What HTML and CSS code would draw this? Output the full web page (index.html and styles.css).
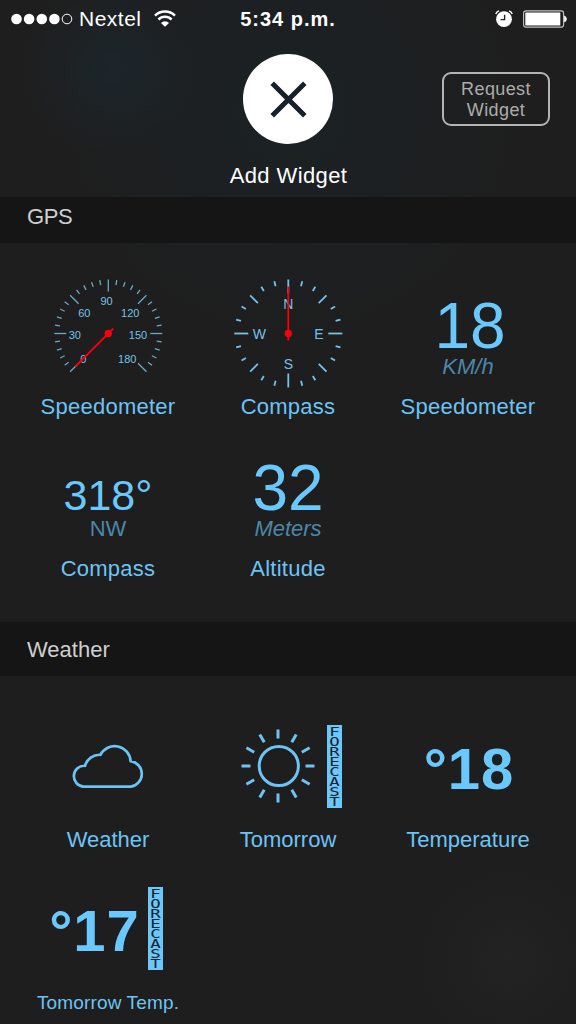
FILE: index.html
```html
<!DOCTYPE html>
<html lang="en">
<head>
    <meta charset="UTF-8">
    <meta name="viewport" content="width=device-width, initial-scale=1.0">
    <title>Add Widget</title>
    <link rel="stylesheet" href="styles.css">
</head>
<body>

<div class="status-bar">
    <div class="carrier">
        <svg class="signal" width="62" height="12" viewBox="0 0 62 12">
            <circle cx="5.5" cy="6" r="5.3" />
            <circle cx="18.1" cy="6" r="5.3" />
            <circle cx="30.8" cy="6" r="5.3" />
            <circle cx="43.4" cy="6" r="5.3" />
            <circle class="empty" cx="56" cy="6" r="4.8" />
        </svg>
        <span>Nextel</span>
        <svg class="wifi" width="22" height="17" viewBox="0 0 22 17">
            <path d="M1 5.6 A14.3 14.3 0 0 1 21 5.6" />
            <path d="M4.4 9.5 A9.3 9.3 0 0 1 17.6 9.5" />
            <path class="solid" d="M7 12.9 A5.4 5.4 0 0 1 15 12.9 L11 16.8 Z" />
        </svg>
    </div>
    <div class="time">5:34 p.m.</div>
    <div class="indicators">
        <svg width="18" height="18" viewBox="0 0 18 18">
            <circle cx="9" cy="9.2" r="7.9" fill="#fff" />
            <path d="M9.6 4.8 V9.6 H5.6" fill="none" stroke="#1d2022" stroke-width="1.4" />
            <path d="M0.8 4 A5 5 0 0 1 4 0.9 M14 0.9 A5 5 0 0 1 17.2 4" fill="none" stroke="#fff" stroke-width="1.4" />
        </svg>
        <svg width="44" height="18" viewBox="0 0 44 18">
            <rect x="0.6" y="0.9" width="40" height="16.2" rx="2.4" fill="none" stroke="#c4c4c4" stroke-width="1.1" />
            <rect x="2.3" y="2.5" width="35" height="13" rx="0.6" fill="#fff" />
            <path d="M41.6 6 A3.4 3.4 0 0 1 41.6 12 Z" fill="#fff" stroke="#fff" stroke-width="0.8" />
        </svg>
    </div>
</div>

<div class="header">
    <div class="add">
        <div class="close-circle">
            <svg width="37" height="37" viewBox="0 0 37 37">
                <path d="M2.2 2.2 L34.8 34.8 M34.8 2.2 L2.2 34.8" />
            </svg>
        </div>
        <div class="title">Add Widget</div>
    </div>
    <div class="request">Request<br>Widget</div>
</div>

<div class="section-title gps-title">GPS</div>
<div class="widgets">
    <div class="widget">
        <div class="icon">
            <svg width="120" height="120" viewBox="-60.3 -60.5 120 120">
                <g id="speed-ticks" class="ticks thin"></g>
                <g class="speed-numbers">
                    <text x="-25" y="29">0</text>
                    <text x="-33.5" y="5">30</text>
                    <text x="-24" y="-17">60</text>
                    <text x="-1.7" y="-28.7">90</text>
                    <text x="22" y="-17">120</text>
                    <text x="29.7" y="5">150</text>
                    <text x="19" y="29">180</text>
                </g>
                <path class="needle" d="M5 -5 L-33 33" />
                <circle class="pivot" cx="0" cy="0" r="3.7" />
            </svg>
        </div>
        <div class="label">Speedometer</div>
    </div>
    <div class="widget">
        <div class="icon">
            <svg width="120" height="120" viewBox="-60.3 -60.5 120 120">
                <g id="compass-ticks" class="ticks"></g>
                <g class="compass-letters">
                    <text x="0" y="-24.5">N</text>
                    <text x="30.5" y="5.5">E</text>
                    <text x="0" y="35.5">S</text>
                    <text x="-29" y="5.5">W</text>
                </g>
                <path class="needle" d="M0 -47 V7" />
                <circle class="pivot" cx="0" cy="0" r="3.7" />
            </svg>
        </div>
        <div class="label">Compass</div>
    </div>
    <div class="widget">
        <div class="icon reading">
            <div class="value speed">18</div>
            <div class="unit italic">KM/h</div>
        </div>
        <div class="label">Speedometer</div>
    </div>
    <div class="widget">
        <div class="icon reading">
            <div class="value small">318°</div>
            <div class="unit">NW</div>
        </div>
        <div class="label">Compass</div>
    </div>
    <div class="widget">
        <div class="icon reading">
            <div class="value">32</div>
            <div class="unit italic">Meters</div>
        </div>
        <div class="label">Altitude</div>
    </div>
</div>

<div class="section-title">Weather</div>
<div class="widgets weather">
    <div class="widget">
        <div class="icon">
            <svg class="cloud" width="73" height="45" viewBox="0 0 73 45">
                <path d="M11.6 42.6 A10.4 10.4 0 0 1 13 21.8 A15 15 0 0 1 28.4 10.8 A16 16 0 0 1 58.6 17.2 A12.8 12.8 0 0 1 58.6 42.6 Z" />
            </svg>
        </div>
        <div class="label">Weather</div>
    </div>
    <div class="widget">
        <div class="icon forecast-icon">
            <svg class="sun" width="74" height="74" viewBox="-37 -37 74 74">
                <circle cx="0.8" cy="0" r="19.6" />
                <g id="sun-rays"></g>
            </svg>
            <svg class="forecast" width="15" height="83" viewBox="0 0 15 83">
                <rect width="15" height="83" />
                <text transform="scale(1.5 1)" x="5" y="11.2">F</text>
                <text transform="scale(1.5 1)" x="5" y="21.2">O</text>
                <text transform="scale(1.5 1)" x="5" y="31.2">R</text>
                <text transform="scale(1.5 1)" x="5" y="41.2">E</text>
                <text transform="scale(1.5 1)" x="5" y="51.2">C</text>
                <text transform="scale(1.5 1)" x="5" y="61.2">A</text>
                <text transform="scale(1.5 1)" x="5" y="71.2">S</text>
                <text transform="scale(1.5 1)" x="5" y="81.2">T</text>
            </svg>
        </div>
        <div class="label">Tomorrow</div>
    </div>
    <div class="widget">
        <div class="icon">
            <div class="temp"><span class="degree">°</span>18</div>
        </div>
        <div class="label">Temperature</div>
    </div>
    <div class="widget">
        <div class="icon">
            <div class="temp wide"><span class="degree">°</span>17</div>
            <svg class="forecast" width="15" height="83" viewBox="0 0 15 83">
                <rect width="15" height="83" />
                <text transform="scale(1.5 1)" x="5" y="11.2">F</text>
                <text transform="scale(1.5 1)" x="5" y="21.2">O</text>
                <text transform="scale(1.5 1)" x="5" y="31.2">R</text>
                <text transform="scale(1.5 1)" x="5" y="41.2">E</text>
                <text transform="scale(1.5 1)" x="5" y="51.2">C</text>
                <text transform="scale(1.5 1)" x="5" y="61.2">A</text>
                <text transform="scale(1.5 1)" x="5" y="71.2">S</text>
                <text transform="scale(1.5 1)" x="5" y="81.2">T</text>
            </svg>
        </div>
        <div class="label label-small">Tomorrow Temp.</div>
    </div>
</div>

<script>
    // Draws one tick, angle in degrees clockwise from the top
    function addTick(group, angle, inner, outer) {
        const line = document.createElementNS("http://www.w3.org/2000/svg", "line");
        line.setAttribute("y1", -outer);
        line.setAttribute("y2", -inner);
        line.setAttribute("transform", `rotate(${angle})`);
        group.appendChild(line);
    }

    const speedTicks = document.getElementById("speed-ticks");
    for (let i = 0; i <= 30; i++) {
        addTick(speedTicks, -135 + i * 9, i % 5 === 0 ? 42 : 49, 54);
    }

    const compassTicks = document.getElementById("compass-ticks");
    for (let angle = 0; angle < 360; angle += 15) {
        let inner = 49;
        if (angle % 90 === 0) {
            inner = 40;
        } else if (angle % 45 === 0) {
            inner = 43;
        }
        addTick(compassTicks, angle, inner, 54);
    }

    const sunRays = document.getElementById("sun-rays");
    for (let angle = 0; angle < 360; angle += 30) {
        addTick(sunRays, angle, 27.5, 36.5);
    }
</script>

</body>
</html>
```
FILE: styles.css
```css
body {
    font-family: "Liberation Sans", Arial, sans-serif;
    margin: 0;
    height: 1024px;
    overflow: hidden;
    background-color: #1e1e1e;
    background-image:
        radial-gradient(circle at 112px 68px, rgba(28, 42, 51, 0.6), rgba(28, 42, 51, 0) 90px),
        radial-gradient(circle at 290px 110px, rgba(26, 34, 39, 0.8), rgba(26, 34, 39, 0) 230px),
        radial-gradient(circle at 510px 960px, rgba(36, 36, 36, 0.8), rgba(36, 36, 36, 0) 90px);
    color: #fff;
}

svg {
    display: block;
    flex: none;
}

/* Status bar */
.status-bar {
    display: grid;
    grid-template-columns: 1fr auto 1fr;
    align-items: center;
    height: 37px;
    padding: 0 9px 0 11px;
}

.carrier {
    display: flex;
    align-items: center;
    font-size: 21px;
    letter-spacing: 0.5px;
}

.signal {
    fill: #fff;
    margin-right: 6px;
}

.signal .empty {
    fill: none;
    stroke: #fff;
    stroke-width: 1;
}

.wifi {
    margin-left: 12px;
    margin-top: -1px;
    fill: none;
    stroke: #fff;
    stroke-width: 2.5;
}

.wifi .solid {
    fill: #fff;
    stroke: none;
}

.time {
    padding-top: 2px;
    font-size: 20px;
    font-weight: bold;
    letter-spacing: 1px;
    margin-left: -2px;
}

.indicators {
    display: flex;
    align-items: center;
    justify-content: flex-end;
    gap: 10px;
}

/* Header */
.header {
    display: grid;
    grid-template-columns: 1fr auto 1fr;
    height: 160px;
}

.add {
    grid-column: 2;
    text-align: center;
    padding-top: 17px;
    padding-left: 1px;
}

.close-circle {
    display: flex;
    align-items: center;
    justify-content: center;
    width: 90px;
    height: 90px;
    margin: 0 auto;
    border-radius: 50%;
    background-color: #fff;
}

.close-circle path {
    stroke: #16212a;
    stroke-width: 5;
}

.title {
    margin-top: 19px;
    font-size: 22px;
    line-height: 26px;
    letter-spacing: 0.4px;
}

.request {
    box-sizing: border-box;
    justify-self: end;
    width: 108px;
    height: 54px;
    margin: 35px 26px 0 0;
    padding-top: 5px;
    border: 2px solid #b4b4b4;
    border-radius: 9px;
    color: #acacac;
    font-size: 18px;
    line-height: 21px;
    letter-spacing: 0.4px;
    text-align: center;
}

/* Sections */
.section-title {
    height: 54px;
    padding-left: 27px;
    background-color: #151515;
    color: #cfcfcf;
    font-size: 22px;
    line-height: 56px;
}

.gps-title {
    height: 46px;
    line-height: 40px;
    letter-spacing: -0.4px;
}

.widgets {
    display: grid;
    grid-template-columns: repeat(3, 180px);
    grid-auto-rows: 162px;
    padding: 27px 18px 28px;
}

.icon {
    display: flex;
    align-items: center;
    justify-content: center;
    height: 126px;
}

.label {
    color: #6cc4f4;
    font-size: 22px;
    line-height: 22px;
    letter-spacing: 0.25px;
    text-align: center;
}

.weather .label {
    letter-spacing: 0;
}

.weather .label-small {
    font-size: 19px;
    line-height: 24px;
    letter-spacing: 0.15px;
}

/* Dials */
.ticks line {
    stroke: #75c3ea;
    stroke-width: 1.8;
}

.ticks.thin line {
    stroke: #6aa9c8;
    stroke-width: 1.3;
}

.speed-numbers,
.compass-letters {
    fill: #74c2ea;
    font-size: 11px;
    text-anchor: middle;
}

.compass-letters {
    font-size: 14px;
}

.needle {
    stroke: #f5000f;
    stroke-width: 1.8;
}

.pivot {
    fill: #f5000f;
}

/* Number readings */
.reading {
    flex-direction: column;
    justify-content: flex-start;
}

.value {
    height: 86px;
    color: #6ac8fc;
    font-size: 64px;
    line-height: 112px;
}

.value.speed {
    padding-left: 4px;
}

.value.small {
    font-size: 43px;
    line-height: 126px;
}

.unit {
    color: #4e86a8;
    font-size: 22px;
    line-height: 22px;
}

.italic {
    font-style: italic;
}

/* Weather */
.cloud path {
    fill: none;
    stroke: #6cc4f4;
    stroke-width: 2.7;
    stroke-linejoin: round;
}

.forecast-icon {
    padding-left: 7px;
}

.sun {
    margin-right: 12px;
    fill: none;
    stroke: #6cc4f4;
    stroke-width: 3;
}

.forecast rect {
    fill: #6cc8fa;
}

.forecast text {
    fill: #14222c;
    font-family: "DejaVu Sans Mono", monospace;
    font-size: 11.6px;
    text-anchor: middle;
}

.temp {
    padding: 4px 0 0 2px;
    color: #6ac8fc;
    font-size: 58px;
    font-weight: bold;
    letter-spacing: 1px;
}

.temp .degree {
    letter-spacing: 1px;
}

.temp.wide {
    padding-left: 0;
    margin-right: 8px;
    margin-left: -4px;
}
```
